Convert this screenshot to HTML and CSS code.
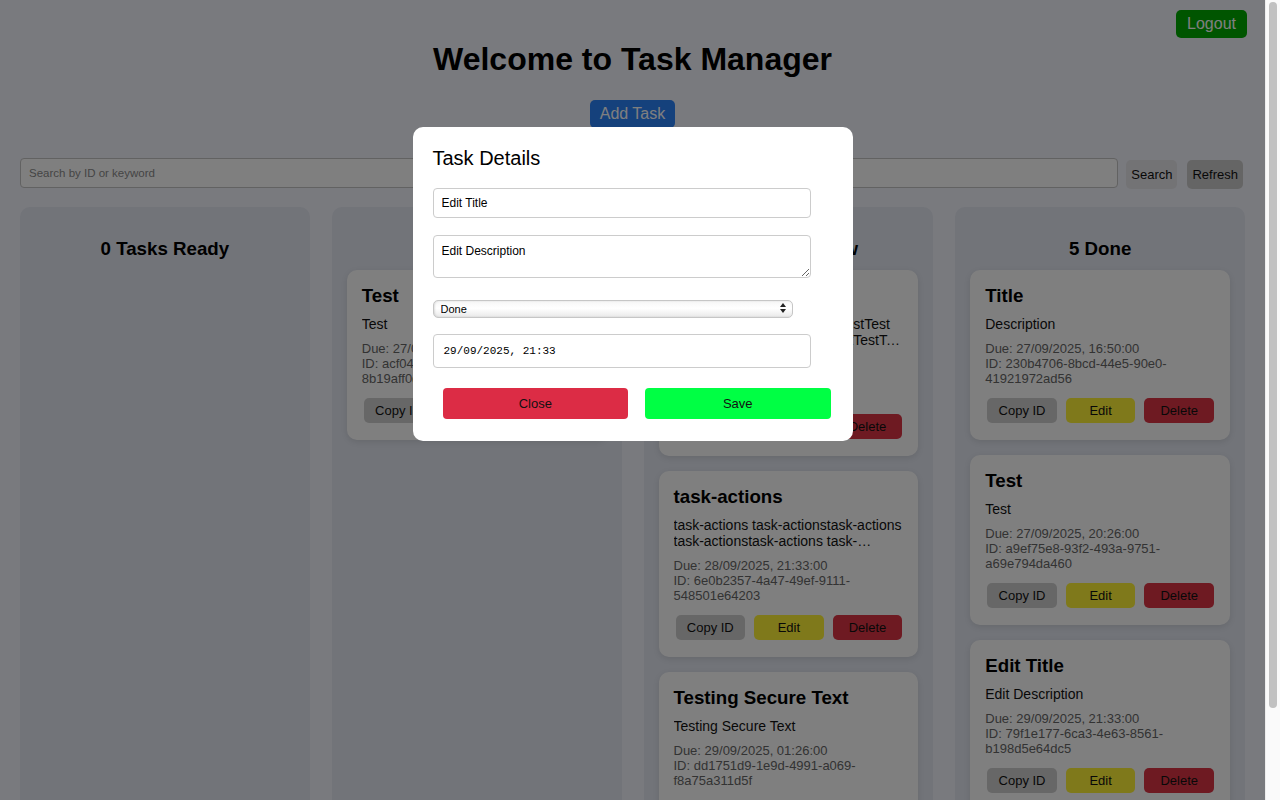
FILE: index.html
```html
<!DOCTYPE html>
<html lang="en">
<head>
<meta charset="utf-8">
<title>Task Manager</title>
<link rel="stylesheet" href="styles.css">
</head>
<body>
<div class="page">
  <button class="logout">Logout</button>
  <div class="container">
    <h1 class="title">Welcome to Task Manager</h1>
    <div class="add-row"><button class="add-btn">Add Task</button></div>
    <div class="search-row">
      <input class="search-input" type="text" placeholder="Search by ID or keyword">
      <button class="search-btn">Search</button>
      <button class="refresh-btn">Refresh</button>
    </div>
    <div class="board">
      <section class="column">
        <h3 class="col-title">0 Tasks Ready</h3>
        <div class="cards"></div>
      </section>
      <section class="column">
        <h3 class="col-title">1 In Progress</h3>
        <div class="cards">
          <article class="card">
            <h3 class="card-title">Test</h3>
            <p class="card-desc">Test</p>
            <div class="card-meta"><span>Due: 27/09/2025, 20:26:00</span><span>ID: acf04c1e-5b2d-4f7a-9e3c-8b19aff0d2e7</span></div>
            <div class="card-actions"><button class="b-copy">Copy ID</button><button class="b-edit">Edit</button><button class="b-del">Delete</button></div>
          </article>
        </div>
      </section>
      <section class="column">
        <h3 class="col-title">3 Under Review</h3>
        <div class="cards">
          <article class="card">
            <h3 class="card-title">TestTest</h3>
            <p class="card-desc break">Test TestTest TestTest TestTestTest TestTestTestTestTestTestTestTestTestTestTestTestTest</p>
            <div class="card-meta"><span>Due: 28/09/2025, 18:00:00</span><span>ID: 3f2a91c4-7d5e-4b8a-a1f2-0c6d9e37b5a1</span></div>
            <div class="card-actions"><button class="b-copy">Copy ID</button><button class="b-edit">Edit</button><button class="b-del">Delete</button></div>
          </article>
          <article class="card">
            <h3 class="card-title">task-actions</h3>
            <p class="card-desc">task-actions task-actionstask-actions task-actionstask-actions task-actionstask-actions task-actionstask-actions</p>
            <div class="card-meta"><span>Due: 28/09/2025, 21:33:00</span><span>ID: 6e0b2357-4a47-49ef-9111-548501e64203</span></div>
            <div class="card-actions"><button class="b-copy">Copy ID</button><button class="b-edit">Edit</button><button class="b-del">Delete</button></div>
          </article>
          <article class="card">
            <h3 class="card-title">Testing Secure Text</h3>
            <p class="card-desc">Testing Secure Text</p>
            <div class="card-meta"><span>Due: 29/09/2025, 01:26:00</span><span>ID: dd1751d9-1e9d-4991-a069-f8a75a311d5f</span></div>
            <div class="card-actions"><button class="b-copy">Copy ID</button><button class="b-edit">Edit</button><button class="b-del">Delete</button></div>
          </article>
        </div>
      </section>
      <section class="column">
        <h3 class="col-title">5 Done</h3>
        <div class="cards">
          <article class="card">
            <h3 class="card-title">Title</h3>
            <p class="card-desc">Description</p>
            <div class="card-meta"><span>Due: 27/09/2025, 16:50:00</span><span>ID: 230b4706-8bcd-44e5-90e0-41921972ad56</span></div>
            <div class="card-actions"><button class="b-copy">Copy ID</button><button class="b-edit">Edit</button><button class="b-del">Delete</button></div>
          </article>
          <article class="card">
            <h3 class="card-title">Test</h3>
            <p class="card-desc">Test</p>
            <div class="card-meta"><span>Due: 27/09/2025, 20:26:00</span><span>ID: a9ef75e8-93f2-493a-9751-a69e794da460</span></div>
            <div class="card-actions"><button class="b-copy">Copy ID</button><button class="b-edit">Edit</button><button class="b-del">Delete</button></div>
          </article>
          <article class="card">
            <h3 class="card-title">Edit Title</h3>
            <p class="card-desc">Edit Description</p>
            <div class="card-meta"><span>Due: 29/09/2025, 21:33:00</span><span>ID: 79f1e177-6ca3-4e63-8561-b198d5e64dc5</span></div>
            <div class="card-actions"><button class="b-copy">Copy ID</button><button class="b-edit">Edit</button><button class="b-del">Delete</button></div>
          </article>
          <article class="card">
            <h3 class="card-title">Deploy</h3>
            <p class="card-desc">Deploy build</p>
            <div class="card-meta"><span>Due: 30/09/2025, 10:00:00</span><span>ID: 5c7d2e91-0b4a-4f3e-8d21-7a9c6b1e4f08</span></div>
            <div class="card-actions"><button class="b-copy">Copy ID</button><button class="b-edit">Edit</button><button class="b-del">Delete</button></div>
          </article>
          <article class="card">
            <h3 class="card-title">Review</h3>
            <p class="card-desc">Review code</p>
            <div class="card-meta"><span>Due: 30/09/2025, 12:00:00</span><span>ID: e41b8a20-3f6c-4d97-b5e2-92a0c7d1f6b3</span></div>
            <div class="card-actions"><button class="b-copy">Copy ID</button><button class="b-edit">Edit</button><button class="b-del">Delete</button></div>
          </article>
        </div>
      </section>
    </div>
  </div>

  <div class="overlay">
    <div class="modal">
      <h2 class="modal-title">Task Details</h2>
      <input class="field" type="text" value="Edit Title">
      <textarea class="field area">Edit Description</textarea>
      <div class="select-wrap">
        <select class="status"><option>Done</option></select>
        <svg class="select-arrows" width="8" height="12" viewBox="0 0 8 12"><path d="M4 1 L7 5 L1 5 Z M4 11 L7 7 L1 7 Z" fill="#222"/></svg>
      </div>
      <input class="field date" type="text" value="29/09/2025, 21:33">
      <div class="modal-actions">
        <button class="btn-close">Close</button>
        <button class="btn-save">Save</button>
      </div>
    </div>
  </div>
</div>
<div class="scrollbar"><div class="scroll-thumb"></div></div>
</body>
</html>
```

FILE: styles.css
```css
html,
body {
  height: 100%;
}

body {
  margin: 0;
  display: flex;
  overflow: hidden;
  background: #f2f4fd;
  font-family: "Liberation Sans", Arial, Helvetica, sans-serif;
  color: #000;
}

button {
  font-family: "Liberation Sans", Arial, Helvetica, sans-serif;
  cursor: pointer;
}

.page {
  position: relative;
  flex: 1;
  min-width: 0;
  height: 100%;
  overflow: hidden;
}

.scrollbar {
  width: 15px;
  flex: none;
  height: 100%;
  box-sizing: border-box;
  background: #fafafa;
  border-left: 1px solid #ededed;
  padding: 2px 3px 0 3px;
}

.scroll-thumb {
  height: 706px;
  border-radius: 4px;
  background: #c1c1c1;
}

.logout {
  position: absolute;
  top: 10px;
  right: 18px;
  height: 28px;
  padding: 0 11px;
  border: none;
  border-radius: 5px;
  background: #00aa00;
  color: #fff;
  font-size: 16px;
}

.container {
  padding: 20px 20px 20px;
}

.title {
  margin: 21.44px 0;
  font-size: 32px;
  font-weight: bold;
  text-align: center;
}

.add-row {
  text-align: center;
  margin-bottom: 30px;
  height: 28px;
}

.add-btn {
  height: 28px;
  padding: 0 10px;
  border: none;
  border-radius: 5px;
  background: #2a82f8;
  color: #fff;
  font-size: 16px;
}

.search-row {
  display: flex;
  align-items: flex-start;
  height: 30px;
  margin-bottom: 19px;
}

.search-input {
  flex: 1;
  height: 30px;
  box-sizing: border-box;
  border: 1px solid #c4c4c4;
  border-radius: 4px;
  padding: 0 8px;
  font-family: "Liberation Sans", Arial, sans-serif;
  font-size: 11.5px;
  background: #fff;
}
.search-input::placeholder {
  color: #8a8a8a;
}

.search-btn,
.refresh-btn {
  height: 29px;
  margin-top: 2px;
  padding: 0 5px;
  border: none;
  border-radius: 5px;
  font-size: 13px;
  color: #111;
}
.search-btn {
  margin-left: 8px;
  background: #e6e6ea;
}
.refresh-btn {
  margin-left: 10px;
  margin-right: 2px;
  background: #cbcbcb;
}

.board {
  display: grid;
  grid-template-columns: repeat(4, 1fr);
  gap: 22px;
}

.column {
  background: #e4e8f2;
  border-radius: 10px;
  padding: 15px 15px 0;
  height: 675px;
  box-sizing: border-box;
  overflow: hidden;
}

.col-title {
  margin: 16px 0 10px;
  font-size: 18.72px;
  font-weight: bold;
  text-align: center;
}

.cards {
  display: flex;
  flex-direction: column;
  gap: 15px;
}

.card {
  background: #fff;
  border-radius: 10px;
  padding: 15px 15px 17px;
  box-shadow: 0 2px 6px rgba(0, 0, 0, 0.1);
}

.card-title {
  margin: 0 0 9px;
  font-size: 18.72px;
  font-weight: bold;
}

.card-desc {
  margin: 0 0 9px;
  font-size: 14px;
  color: #111;
  display: -webkit-box;
  -webkit-line-clamp: 2;
  -webkit-box-orient: vertical;
  overflow: hidden;
}
.card-desc.break {
  overflow-wrap: anywhere;
}

.card-meta {
  margin-bottom: 12px;
  font-size: 13px;
  color: #666;
}
.card-meta span {
  display: block;
}

.card-actions {
  display: flex;
  gap: 9px;
  padding: 0 1px 0 2px;
}
.card-actions button {
  flex: 1;
  height: 25px;
  border: none;
  border-radius: 5px;
  font-size: 13px;
  color: #111;
}
.b-copy {
  background: #cfcfcf;
}
.b-edit {
  background: #fff236;
}
.b-del {
  background: #dc3545;
}

/* modal */
.overlay {
  position: absolute;
  inset: 0;
  background: rgba(0, 0, 0, 0.5);
  display: flex;
  justify-content: center;
  align-items: flex-start;
  padding-top: 127px;
}

.modal {
  width: 440px;
  box-sizing: border-box;
  background: #fff;
  border-radius: 10px;
  padding: 20px 20px 22px;
}

.modal-title {
  margin: 0 0 18px;
  font-size: 20px;
  font-weight: normal;
  line-height: 23px;
}

.field {
  display: block;
  width: 90%;
  box-sizing: content-box;
  border: 1px solid #cccccc;
  border-radius: 4px;
  padding: 0 8px;
  height: 28px;
  margin: 0 0 17px;
  font-family: "Liberation Sans", Arial, sans-serif;
  font-size: 12px;
  color: #000;
  background: #fff;
}

.area {
  padding: 8px;
  height: 25px;
  margin-bottom: 20.5px;
  resize: vertical;
  line-height: 14px;
}

.select-wrap {
  position: relative;
  width: 90%;
  height: 18px;
  margin-bottom: 17px;
}

.status {
  appearance: none;
  -webkit-appearance: none;
  width: 100%;
  height: 18px;
  box-sizing: border-box;
  border: 1px solid #c6c6c6;
  border-radius: 5px;
  padding: 0 0 0 7px;
  font-family: "Liberation Sans", Arial, sans-serif;
  font-size: 11px;
  color: #000;
  background: linear-gradient(#f6f6f6, #ffffff 45%, #e9e9e9);
  box-shadow: inset 1px 0 2px rgba(0, 0, 0, 0.12);
}

.select-arrows {
  position: absolute;
  right: 6px;
  top: 3px;
  pointer-events: none;
}

.date {
  height: 32px;
  margin-bottom: 20.5px;
  font-family: "Liberation Mono", "DejaVu Sans Mono", monospace;
  font-size: 11px;
  text-indent: 2px;
}

.modal-actions {
  display: flex;
  gap: 17px;
  padding: 0 2px 0 10px;
}
.modal-actions button {
  flex: 1;
  height: 31px;
  border: none;
  border-radius: 4px;
  font-size: 13px;
  color: #111;
}
.btn-close {
  background: #dc2c45;
}
.btn-save {
  background: #00ff44;
}
```
